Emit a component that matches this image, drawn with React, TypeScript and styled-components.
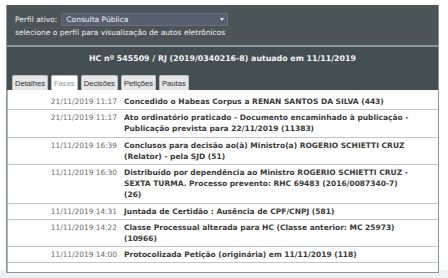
import React from 'react';
import styled, { createGlobalStyle } from 'styled-components';

const GlobalStyle = createGlobalStyle`
  html, body {
    margin: 0;
    padding: 0;
    background: #ffffff;
  }
  body {
    font-family: "DejaVu Sans", Verdana, sans-serif;
  }
`;

const Page = styled.div`
  width: 448px;
  height: 278px;
  padding: 5px 0 0 6px;
  box-sizing: border-box;
  background: linear-gradient(#ffffff 0, #ffffff 270px, #eef2f6 270px);
`;

const Panel = styled.div`
  width: 433px;
  border: 1px solid #8d9497;
  border-top: none;
  box-sizing: border-box;
  background: #ffffff;
`;

const ProfileBar = styled.div`
  background: #4b5558;
  padding: 7px 8px 6px;
  color: #eef1f2;
  font-size: 7.5px;
  border-bottom: 2px solid #87979a;
`;

const ProfileRow = styled.div`
  display: flex;
  align-items: center;
  gap: 4px;
  height: 14px;
`;

const ProfileSelect = styled.div`
  width: 167px;
  height: 13px;
  box-sizing: border-box;
  background: #56606f;
  border: 1px solid #66707c;
  display: flex;
  align-items: center;
  justify-content: space-between;
  padding: 0 3px 0 4px;
  color: #f4f6f8;
`;

const Caret = styled.span`
  width: 0;
  height: 0;
  border-left: 2px solid transparent;
  border-right: 2px solid transparent;
  border-top: 3px solid #e8ebee;
`;

const Hint = styled.div`
  margin-top: 1px;
  line-height: 12px;
`;

const TitleBar = styled.div`
  background: #444f53;
  padding: 6px 0 0 5px;
`;

const Title = styled.div`
  text-align: center;
  color: #f4f6f7;
  font-weight: bold;
  font-size: 7.85px;
  line-height: 11px;
  padding-right: 5px;
`;

const Tabs = styled.div`
  display: flex;
  gap: 3px;
  margin-top: 11px;
  align-items: flex-end;
`;

const Tab = styled.div<{ $active?: boolean }>`
  font-family: "Liberation Sans", Arial, sans-serif;
  font-size: 7.6px;
  height: 15px;
  line-height: 15px;
  padding: 0 2px;
  box-sizing: border-box;
  border: 1px solid #b9bec0;
  border-bottom: none;
  border-radius: 2px 2px 0 0;
  background: ${(p) => (p.$active ? '#ffffff' : '#e4e6e7')};
  color: ${(p) => (p.$active ? '#8f9598' : '#2c2c2c')};
`;

const List = styled.div`
  padding: 4px 0 9px;
  border-left: 1px solid #b5b9bb;
`;

const Row = styled.div`
  display: flex;
  gap: 7px;
  padding: 2px 0;
  border-bottom: 1px solid #c3c6c8;
  font-size: 7.5px;
  line-height: 11.2px;
`;

const DateCell = styled.div`
  width: 109px;
  flex: none;
  text-align: right;
  color: #6a6a6a;
  font-size: 7.4px;
`;

const Desc = styled.div`
  font-weight: bold;
  color: #3a3a3a;
  white-space: nowrap;
`;

const Line = styled.div``;

const phases: { date: string; lines: string[] }[] = [
  { date: '21/11/2019 11:17', lines: ['Concedido o Habeas Corpus a RENAN SANTOS DA SILVA (443)'] },
  {
    date: '21/11/2019 11:17',
    lines: [
      'Ato ordinatório praticado - Documento encaminhado à publicação -',
      'Publicação prevista para 22/11/2019 (11383)',
    ],
  },
  {
    date: '11/11/2019 16:39',
    lines: ['Conclusos para decisão ao(à) Ministro(a) ROGERIO SCHIETTI CRUZ', '(Relator) - pela SJD (51)'],
  },
  {
    date: '11/11/2019 16:30',
    lines: [
      'Distribuído por dependência ao Ministro ROGERIO SCHIETTI CRUZ -',
      'SEXTA TURMA. Processo prevento: RHC 69483 (2016/0087340-7)',
      '(26)',
    ],
  },
  { date: '11/11/2019 14:31', lines: ['Juntada de Certidão : Ausência de CPF/CNPJ (581)'] },
  {
    date: '11/11/2019 14:22',
    lines: ['Classe Processual alterada para HC (Classe anterior: MC 25973)', '(10966)'],
  },
  { date: '11/11/2019 14:00', lines: ['Protocolizada Petição (originária) em 11/11/2019 (118)'] },
];

const tabs = ['Detalhes', 'Fases', 'Decisões', 'Petições', 'Pautas'];

export default function App() {
  return (
    <Page>
      <GlobalStyle />
      <Panel>
        <ProfileBar>
          <ProfileRow>
            <span>Perfil ativo:</span>
            <ProfileSelect>
              <span>Consulta Pública</span>
              <Caret />
            </ProfileSelect>
          </ProfileRow>
          <Hint>selecione o perfil para visualização de autos eletrônicos</Hint>
        </ProfileBar>
        <TitleBar>
          <Title>HC nº 545509 / RJ (2019/0340216-8) autuado em 11/11/2019</Title>
          <Tabs>
            {tabs.map((t) => (
              <Tab key={t} $active={t === 'Fases'}>
                {t}
              </Tab>
            ))}
          </Tabs>
        </TitleBar>
        <List>
          {phases.map((p, i) => (
            <Row key={i}>
              <DateCell>{p.date}</DateCell>
              <Desc>
                {p.lines.map((l, j) => (
                  <Line key={j}>{l}</Line>
                ))}
              </Desc>
            </Row>
          ))}
        </List>
      </Panel>
    </Page>
  );
}
